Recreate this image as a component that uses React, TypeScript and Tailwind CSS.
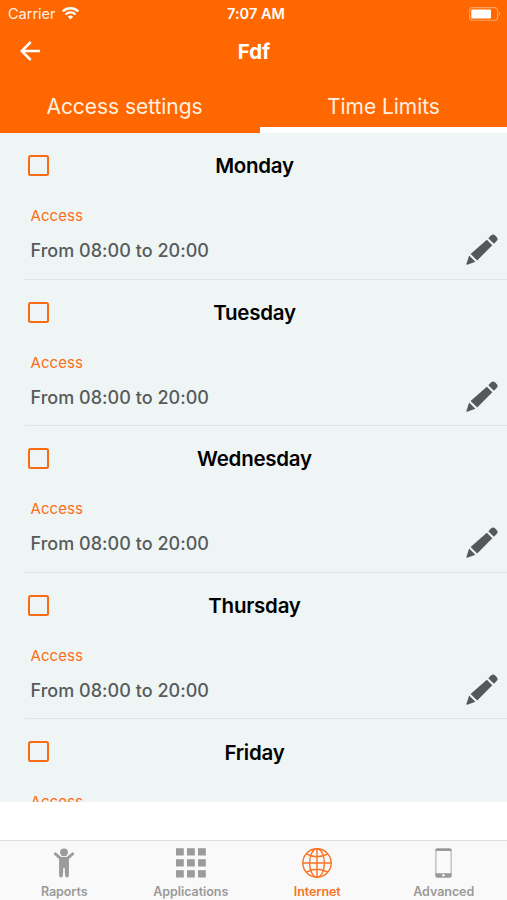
import React, { useState } from "react";

const DAYS = ["Monday", "Tuesday", "Wednesday", "Thursday", "Friday"];

const WifiIcon = () => (
  <svg width="17" height="13" viewBox="0 0 17 13" fill="none">
    <path d="M.7 4.5a11 11 0 0 1 15.6 0" stroke="#fff" strokeWidth="2.3" />
    <path d="M3.6 7.4a6.9 6.9 0 0 1 9.8 0" stroke="#fff" strokeWidth="2.2" />
    <path d="M8.5 12.4 5.9 9.7a3.7 3.7 0 0 1 5.2 0z" fill="#fff" />
  </svg>
);

const BatteryIcon = () => (
  <svg width="32" height="14" viewBox="0 0 32 14" fill="none">
    <rect x="0.6" y="0.6" width="28" height="12.6" rx="3" stroke="#ffa366" strokeWidth="1.1" />
    <rect x="2.3" y="2.4" width="19.7" height="9" rx="1" fill="#fff" />
    <path d="M30 4.8c1.8.6 1.8 3.6 0 4.2z" fill="#ffa366" />
  </svg>
);

const BackIcon = () => (
  <svg width="20" height="20" viewBox="0 0 20 20" fill="none" stroke="#fff" strokeWidth="2.5">
    <path d="M10.7 1 1.8 10l8.9 9M2 10h18" />
  </svg>
);

const PencilIcon = () => (
  <svg width="32" height="32" viewBox="0 0 32 32" fill="#555858">
    <path d="M22.3 4.2 25 1.5a3 3 0 0 1 4.2 0l1.4 1.4a3 3 0 0 1 0 4.2l-2.7 2.7z" />
    <path d="m20.8 5.8 5.5 5.5L11.2 26.4l-6.6-6.5z" />
    <path d="m3.1 21.6 6.3 6.1-8.2 3q-1 .2-.8-.8z" />
  </svg>
);

const PersonIcon = () => (
  <svg width="22" height="30" viewBox="0 0 22 30" fill="#9b9b9b">
    <circle cx="11" cy="4.3" r="3.9" />
    <path d="m2.2 5.8 5.4 4.6h6.8l5.4-4.6" stroke="#9b9b9b" strokeWidth="2.8" strokeLinecap="round" strokeLinejoin="round" fill="none" />
    <path d="M6.1 9.2h9.8v18.3a1.9 1.9 0 0 1-3.8 0l-.4-7.5h-1.4l-.4 7.5a1.9 1.9 0 0 1-3.8 0z" />
  </svg>
);

const GridIcon = () => (
  <svg width="30" height="30" viewBox="0 0 30 30" fill="#9b9b9b">
    {[0, 11, 22].map((y) =>
      [0, 11, 22].map((x) => <rect key={`${x}-${y}`} x={x} y={y + 0.2} width="7.8" height="7.3" />)
    )}
  </svg>
);

const GlobeIcon = () => (
  <svg width="30" height="30" viewBox="0 0 30 30" fill="none" stroke="#fa7321" strokeWidth="1.4">
    <circle cx="15" cy="15" r="14.2" />
    <ellipse cx="15" cy="15" rx="7.4" ry="14.2" />
    <path d="M15 .8v28.4M.8 15h28.4M4.3 5.8q10.7 5.8 21.4 0M4.3 24.2q10.7-5.8 21.4 0" />
  </svg>
);

const PhoneIcon = () => (
  <svg width="17" height="30" viewBox="0 0 17 30" fill="none">
    <rect x="0.9" y="0.9" width="15.2" height="28.2" rx="1.3" stroke="#a6a6a6" strokeWidth="1" />
    <path d="M.5 3V1.8Q.5.4 2 .4h13q1.5 0 1.5 1.4V3zM.5 25.2h16v2.9q0 1.4-1.5 1.4H2q-1.5 0-1.5-1.4z" fill="#999" />
    <circle cx="8.5" cy="27.3" r="1.2" fill="#f8f8f8" />
  </svg>
);

const NAV_ITEMS = [
  { label: "Raports", icon: <PersonIcon /> },
  { label: "Applications", icon: <GridIcon /> },
  { label: "Internet", icon: <GlobeIcon /> },
  { label: "Advanced", icon: <PhoneIcon /> },
];

const DayRow: React.FC<{ day: string }> = ({ day }) => {
  const [checked, setChecked] = useState(false);

  return (
    <div className="ml-[25px] h-[146.6px] shrink-0 border-b border-[#dfe4e4]">
      <div className="grid h-[65px] grid-cols-[1fr_auto_1fr] items-center pr-[23px]">
        <button
          onClick={() => setChecked(!checked)}
          className={`ml-[3px] size-[21px] rounded-[2.5px] border-2 border-[#f76c14] ${checked ? "bg-[#f76c14]" : ""}`}
        />
        <h2 className="pt-[2px] text-[20.5px] font-semibold tracking-[-0.25px] text-black">{day}</h2>
      </div>
      <div className="flex pr-[9px] pl-[5.5px]">
        <div className="flex-1">
          <p className="h-[35px] text-[15px] leading-[35px] tracking-[0.05px] text-[#fa6e17]">Access</p>
          <p className="h-[35px] text-[18px] leading-[35px] font-medium tracking-[0.03px] text-[#585b5b]">
            From 08:00 to 20:00
          </p>
        </div>
        <button className="mt-[36px] size-[32px]">
          <PencilIcon />
        </button>
      </div>
    </div>
  );
};

export default function App() {
  const [active, setActive] = useState("Internet");

  return (
    <div className="flex h-[900px] w-[507px] flex-col overflow-hidden bg-white font-['Inter','Liberation_Sans',sans-serif]">
      {/* Header */}
      <header className="h-[133px] bg-[#ff6700] text-white">
        <div className="grid h-[27px] grid-cols-[1fr_auto_1fr] items-center pr-[6px] pl-[11px] text-[14.5px]">
          <div className="-ml-[3px] flex items-center gap-[6px]">
            <span className="text-[#fff0e5]">Carrier</span>
            <WifiIcon />
          </div>
          <span className="text-center font-semibold tracking-[0.05px]">7:07 AM</span>
          <div className="flex justify-end">
            <BatteryIcon />
          </div>
        </div>
        <div className="grid h-[50px] grid-cols-3 items-center px-[20px]">
          <button className="mb-[2px] w-5">
            <BackIcon />
          </button>
          <h1 className="pt-[1px] pl-[1px] text-center text-[20.5px] font-bold">Fdf</h1>
        </div>
        <div className="flex h-[56px] text-[21px] tracking-[-0.05px] text-[#fff0e0]">
          <button className="w-[260px] pt-[3px] pr-[11px]">Access settings</button>
          <button className="flex-1 border-b-[6px] border-white pt-[9px]">Time Limits</button>
        </div>
      </header>

      {/* Days */}
      <main className="flex h-[669px] flex-col overflow-hidden bg-[#eff5f5]">
        {DAYS.map((day) => (
          <DayRow key={day} day={day} />
        ))}
      </main>

      {/* Bottom navigation */}
      <nav className="mt-auto grid h-[60px] grid-cols-4 border-t border-[#dcdcdc] bg-[#f9f9f9] pl-[1px]">
        {NAV_ITEMS.map(({ label, icon }) => (
          <button
            key={label}
            onClick={() => setActive(label)}
            className={`flex flex-col items-center pt-[7px] text-[12.5px] font-semibold tracking-[-0.05px] ${
              active === label ? "text-[#fa7321]" : "text-[#999]"
            }`}
          >
            {icon}
            <span className="mt-[5px] leading-[18px]">{label}</span>
          </button>
        ))}
      </nav>
    </div>
  );
}
